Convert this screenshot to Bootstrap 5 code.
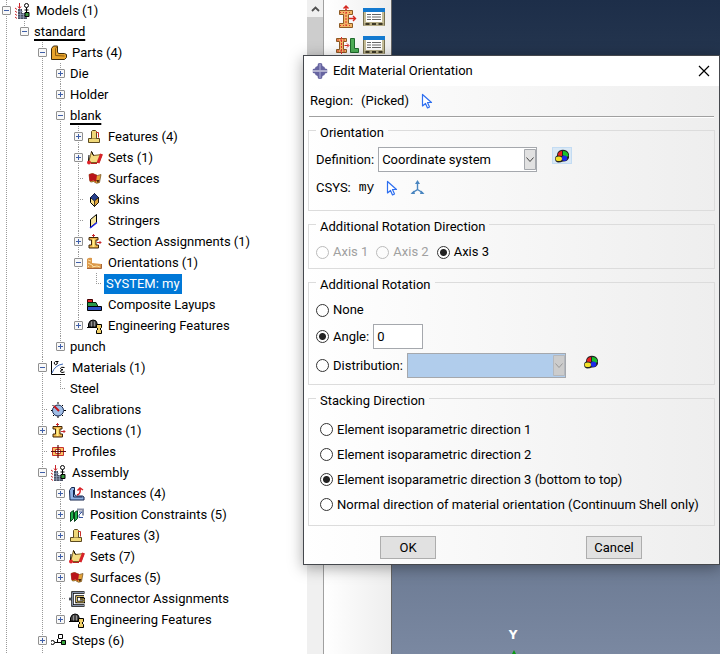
<!DOCTYPE html>
<html lang="en">
<head>
<meta charset="utf-8">
<meta name="viewport" content="width=device-width, initial-scale=1">
<title>Edit Material Orientation</title>
<link href="https://cdn.jsdelivr.net/npm/bootstrap@5.3.0/dist/css/bootstrap.min.css" rel="stylesheet">
<style>
  body { font: 13px/18px Roboto, "Noto Sans", sans-serif; color: #000; background: #fff; }
  svg { flex: none; display: block; }
  /* model tree */
  .tree-pane { width: 307px; }
  .tree ul { padding-left: 18px; }
  .tree li {
    background: repeating-linear-gradient(#999 0 1px, transparent 1px 2px) 6px 0 / 1px 100% no-repeat;
  }
  .tree li.tail { background-size: 1px 11px; }
  .node { height: 21px; padding-left: 2px; gap: 5px; white-space: nowrap; }
  .node svg { margin-left: -1px; }
  .twist {
    width: 9px; height: 9px; padding: 0; flex: none; border: 1px solid #919191; border-radius: 1px;
    background: linear-gradient(#3f5fa8, #3f5fa8) center / 5px 1px no-repeat, #f8f8f8;
  }
  .twist.plus {
    background: linear-gradient(#3f5fa8, #3f5fa8) center / 5px 1px no-repeat,
      linear-gradient(#3f5fa8, #3f5fa8) center / 1px 5px no-repeat, #f8f8f8;
  }
  .stub {
    width: 9px; height: 1px; flex: none;
    background: repeating-linear-gradient(90deg, #999 0 1px, transparent 1px 2px) right / 5px 1px no-repeat;
  }
  .current { text-decoration: underline 2px; text-underline-offset: 3px; text-decoration-skip-ink: none; }
  .picked { background: #0078d7; color: #fff; margin-left: -2px; padding: 1px 2px; }
  /* scroll bar, tool box, canvas */
  .scroller { width: 16px; background: #f0f0f0; }
  .scroller button { height: 17px; }
  .thumb { height: 420px; background: #cdcdcd; }
  .toolbox { width: 69px; background: linear-gradient(90deg, #fff, #eee); border: solid; border-width: 0 1px; border-color: #555 #666 #555 #a0a0a0; padding: 5px 4px 0 12px; }
  .toolbox .tools { display: grid; grid-template-columns: 27px 22px; row-gap: 6px; align-items: center; }
  .canvas3d { background: linear-gradient(#1d2e49, #25364f 10%, #7a88a1); padding-left: 116px; }
  .axis-y { font: bold 12px/14px "DejaVu Sans", sans-serif; color: #fff; width: 10px; }
  /* dialog */
  .dlg { left: 303px; right: 0; top: 55px; border: 1px solid #45484d; background: linear-gradient(90deg, #fff, #eee); box-shadow: 0 3px 14px rgba(0, 0, 0, .35); padding-bottom: 5px; }
  .dlg-head { height: 30px; background: #fff; padding: 0 9px 0 8px; gap: 5px; }
  .region { height: 30px; padding: 0 6px; gap: 8px; }
  .rule { margin: 0 5px; border-top: 1px solid #a0a0a0; border-bottom: 1px solid #fff; }
  .group { border: 1px solid #dcdcdc; margin: 0 4px 1px; padding: 0 7px 6px; }
  .group legend { float: none; width: auto; margin: 0; padding: 6px 4px 0; font-size: 13px; line-height: 18px; }
  .line { height: 20px; margin-top: 6px; }
  .line.tall { height: 25px; margin-top: 4px; }
  .group.g-orient { padding-bottom: 12px; }
  .g-orient .line.tall { margin-top: 5px; }
  .group.g-stack { padding: 0 11px 8px; }
  .g-stack legend { margin-left: -4px; }
  .stack-list { padding-top: 7px; }
  .g-stack .line.tall { margin-top: 0; }
  .form-check-input.dot { width: 13px; height: 13px; margin: 0; flex: none; border: 1px solid #333; background: #fff; box-shadow: none; }
  .form-check-input.dot:checked { background: radial-gradient(circle, #222 0 3px, #fff 4px); border-color: #333; }
  .form-check-input.dot:disabled { border-color: #bbb; opacity: 1; background: transparent; }
  .opt { gap: 4px; }
  .dim { color: #a0a0a0; }
  .field { height: 25px; border: 1px solid #a5a8ad; border-radius: 0; padding: 0 3px; font-size: 13px; line-height: 18px; color: #000; background-color: #fff; }
  .combo { width: 159px; appearance: none; background: #fff url("data:image/svg+xml,%3Csvg xmlns='http://www.w3.org/2000/svg' width='12' height='23'%3E%3Cpath fill='%23e1e1e1' stroke='%23a5a8ad' d='M.5 1.5h11v20h-11z'/%3E%3Cpath fill='none' stroke='%23444' d='M2.500 9.500l3.500 4 3.500-4'/%3E%3C/svg%3E") right 0 center no-repeat; }
  .combo:disabled { opacity: 1; background: #b1cdec url("data:image/svg+xml,%3Csvg xmlns='http://www.w3.org/2000/svg' width='12' height='23'%3E%3Cpath fill='%23ccc' stroke='%23b5b8bd' d='M.5 1.5h11v20h-11z'/%3E%3Cpath fill='none' stroke='%23999' d='M2.500 9.500l3.500 4 3.500-4'/%3E%3C/svg%3E") right 0 center no-repeat; }
  .angle { width: 50px; }
  .bare { padding: 0; border: 0; background: none; }
  .hot { background: #d9e8f5; border: 1px solid #c4dcf3; }
  .palette { width: 20px; height: 17px; margin: 0 0 8px 11px; display: grid; place-items: center; }
  .mono { font-family: "Liberation Mono", monospace; }
  .actions { margin-top: 10px; padding: 0 77px 0 76px; }
  .push { width: 56px; height: 23px; padding: 0; border: 1px solid #adadad; border-radius: 0; background: #e1e1e1; color: #000; font-size: 13px; line-height: 18px; }
</style>
<script src="https://cdn.jsdelivr.net/npm/bootstrap@5.3.0/dist/js/bootstrap.bundle.min.js"></script>
</head>
<body class="overflow-hidden">
<svg width="0" height="0" class="position-absolute" aria-hidden="true">
  <symbol id="i-model" viewBox="0 0 16 16">
    <path d="M3 6h4v4h5v6H3z" fill="#4b5264"/><path d="M3 8.500h5M3 11.500h9M3 14h9M5.500 6v10M8.500 10v6" stroke="#9aa4bd" stroke-width=".7"/>
    <path d="M4.500 0v5M3 3.500l1.500 2 1.500-2M0 5l2 1.500M0 8l2 1.500M0 11l2 1.500M0 14l2 1.500" fill="none" stroke="#c9242b"/>
    <circle cx="11.500" cy="2.500" r="2" fill="#fff" stroke="#000"/><path d="M11.500 4.500v5M9.500 7h4" stroke="#000"/><path d="M10 9.500h4v4h-4z" fill="#3c9a3f" stroke="#000"/>
  </symbol>
  <symbol id="i-part" viewBox="0 0 16 16">
    <path d="M.5 3.500l2-2.500h4v6l1 1.500h6l2 1v3l-2 2H.5z" fill="#e8a42c" stroke="#3b2a0c"/><path d="M4.500 3.500v7l9 .5M6.500 1l-2 2.500" fill="none" stroke="#8a5a10"/>
  </symbol>
  <symbol id="i-feature" viewBox="0 0 16 16">
    <path d="M1.500 9.500h11v4h-11z" fill="#f0d878" stroke="#5c4a20"/><path d="M4.500 9.500v-7l1-1h3l1 1v7" fill="#f0d878" stroke="#5c4a20"/><path d="M9 3.500h2.500v5" fill="none" stroke="#c9302c"/>
  </symbol>
  <symbol id="i-set" viewBox="0 0 16 16">
    <path d="M1.500 12.500l2-7 1-4 2 4 8.500-1-3 8z" fill="#f3dc82" stroke="#7a5b1d"/><path d="M2 5l-.5 6M4.500 1.500L6.500 5.500" stroke="#000"/><path d="M14.500 4l-3.500 9" stroke="#d8232a" stroke-width="3"/><circle cx="2" cy="12.500" r="2" fill="#e02228"/><path d="M4 13.500h6" stroke="#b22"/>
  </symbol>
  <symbol id="i-surface" viewBox="0 0 16 16">
    <path d="M2 3.500q4-2 6 0t6 0l-1.500 8q-3 2-6-1-3 1-3.500 0z" fill="#e5a33a" stroke="#6b4a18" stroke-width=".7"/><path d="M2 3.500q4-2 6 0l2 .5-1 7q-2-2-3-1.500-2 1-3.500 0z" fill="#b8141a"/><path d="M9 9l2 3 1.500-3z" fill="#4c2a10"/>
  </symbol>
  <symbol id="i-skin" viewBox="0 0 16 16">
    <path d="M3.500 5.500l4-4 4 4v5l-4 4-4-4z" fill="#f6dd86" stroke="#000"/><path d="M3.500 5.500l4-4 4 4-4 3.500z" fill="#27408c" stroke="#14204a"/><path d="M7.500 9v5.500l4-4v-5z" fill="#dfa43d" stroke="#000" stroke-width=".7"/>
  </symbol>
  <symbol id="i-stringer" viewBox="0 0 16 16">
    <path d="M3.500 6.500l6-5v8l-6 5z" fill="#f6e59b" stroke="#000"/><path d="M3 15l7-5.500" stroke="#1a25ee" stroke-width="1.500"/>
  </symbol>
  <symbol id="i-section" viewBox="0 0 16 16">
    <path d="M2 3.500h9v2.500H9v5h2.500v3H2v-3h2.500V6H2z" fill="#f0b54b" stroke="#3f2408"/><path d="M6.500 0v3M5 1.500h3M10 8.500h4M12.500 7l1.500 1.500-1.500 1.500" fill="none" stroke="#c8272c"/><path d="M6.500 5v8" stroke="#fff08a" stroke-width="2"/>
  </symbol>
  <symbol id="i-orient" viewBox="0 0 16 16">
    <path d="M0 4q2-2 5-1v5l9.500 1v4.500H0z" fill="#dc9a4c"/><path d="M1 5l3 1M1 8l4 2 2 2M5 12l5-1 3 1M1 11l1 1" stroke="#fbe0a8" fill="none"/><path d="M0 13.500h14.500V9" fill="none" stroke="#a8663a"/>
  </symbol>
  <symbol id="i-layup" viewBox="0 0 16 16">
    <path d="M.5 2.500h5v3h-5z" fill="#e4252b" stroke="#400"/><path d="M.5 5.500H9l2 4H.5z" fill="#2a9a4a" stroke="#021"/><path d="M.5 9.500h14v4H.5z" fill="#2c50c8" stroke="#000"/>
  </symbol>
  <symbol id="i-eng" viewBox="0 0 16 16">
    <path d="M1.500 9V6q1-4 4.500-4t4 3v4z" fill="#454545" stroke="#000"/><path d="M-1 9.500h11" stroke="#000"/><path d="M4.500 3.500v5M7.500 3.500v5" stroke="#aaa" stroke-width=".8"/><path d="M9.500 6.500h5v3l-1.500 1.500 1.500 1.500v3h-5v-3l1.500-1.500-1.500-1.500z" fill="#f1d069" stroke="#000"/>
  </symbol>
  <symbol id="i-material" viewBox="0 0 16 16">
    <path d="M.5 1v13.500H14" fill="none" stroke="#000"/><path d="M1 13q3-8 11-9" fill="none" stroke="#3c68b8"/><path d="M7.500 1.500H4.500q-2 1-1 2.500t2.500 0T5 1.500M13.500 7.500q-4-1-4 1 0 1 2.500 1.200-3 .3-2.500 2 1 1.500 4 .3" fill="none" stroke="#000"/>
  </symbol>
  <symbol id="i-calib" viewBox="0 0 16 16">
    <path d="M7 0v2M7 14v2M0 8.500h2M13 8.500h2M1.500 3l1 1M12 3l-1 1M2 14l1-1M12 14l-1-1" stroke="#000"/><circle cx="7" cy="8.500" r="5.500" fill="#9fbde6" stroke="#1b2b50"/><path d="M3 4l5 5" stroke="#c3161c" stroke-width="2"/>
  </symbol>
  <symbol id="i-profile" viewBox="0 0 16 16">
    <path d="M1.500 3.500h11v8h-11z" fill="#f6c765" stroke="#c9302c"/><path d="M4.500 5.500h5v4h-5z" fill="#fff" stroke="#c9302c"/><path d="M7 1v13M0 7.500h15" stroke="#5a1010" stroke-width="1.200"/>
  </symbol>
  <symbol id="i-instance" viewBox="0 0 16 16">
    <path d="M.5 4.500l2-3h3v7l2 1.500h6l1.500 1v3h-14z" fill="#8fb2e4" stroke="#14254d"/><path d="M4.500 4v7h9" fill="none" stroke="#14254d"/><path d="M8 9q4-1 3-6M8.500 4.500L11 2l3 2" fill="none" stroke="#d81f26" stroke-width="1.500"/>
  </symbol>
  <symbol id="i-position" viewBox="0 0 16 16">
    <path d="M1.500 5.500l3-2v8l-3 3zM5.500 5.500l3-2v8l-3 3z" fill="#22b14c" stroke="#06401a"/><path d="M8 2.500h6v6" fill="none" stroke="#8891a8" stroke-width="2"/><path d="M10 5h3l-3 3v2.500h4" fill="none" stroke="#34529e"/>
  </symbol>
  <symbol id="i-connector" viewBox="0 0 16 16">
    <path d="M15.500 1.500h-12v13h12M0 8h3.500M15 5.500H7.500v5.500H15V8h-4" fill="none" stroke="#000" stroke-width="2.400"/><path d="M15 1.500H3.500v13H15M0 8h3" fill="none" stroke="#a9bad8" stroke-width=".8"/><path d="M15 5.500H7.500v5.500H15V8h-4" fill="none" stroke="#f0d070" stroke-width=".9"/>
  </symbol>
  <symbol id="i-step" viewBox="0 0 16 16">
    <circle cx="1.500" cy="9.500" r="2" fill="#fff" stroke="#000"/><path d="M4 9.500h6M6.500 9V6" stroke="#000"/><path d="M7.500 1.500h4v4h-4z" fill="#fff" stroke="#000"/><path d="M10.500 7.500h4v4h-4z" fill="#39a53c" stroke="#000"/>
  </symbol>
  <symbol id="i-table" viewBox="0 0 22 20">
    <path d="M.5 1.500h21v17H.5z" fill="#fff" stroke="#77704f"/><path d="M0 1h22v4H0z" fill="#1379cf"/><path d="M1 15h20v4H1z" fill="#b5ac86"/><path d="M2 5v11M20 5v11" stroke="#c5bd98" stroke-width="2"/><path d="M4 7.500h4M4 10h4M4 12.500h4M9 7.500h9M9 10h9M9 12.500h9" stroke="#666"/><path d="M2.500 17h4M9 17h4M15.500 17h4" stroke="#3c3826" stroke-width="2"/>
  </symbol>
  <symbol id="i-beam" viewBox="0 0 22 24">
    <path d="M3.500 5.500h13v4h-4v9h4v4h-13v-4h4v-9h-4z" fill="#f2b565" stroke="#8d5a24"/><path d="M10 1v21" stroke="#d33" stroke-dasharray="2 1"/><path d="M4 7.500h12M4 20.500h12" stroke="#d33" stroke-dasharray="1 2"/><path d="M10 5V1M7.500 3.500L10 1l2.500 2.500M13 13.500h6M17 11l2.500 2.500-2.500 2.500" fill="none" stroke="#d4281f" stroke-width="1.400"/>
  </symbol>
  <symbol id="i-beaml" viewBox="0 0 24 20">
    <path d="M.5 3.500h10v3h-3v8h3v3H.5v-3h3v-8h-3z" fill="#f2b565" stroke="#8d5a24"/><path d="M5.500 2v17M1 5h9M1 16h9" stroke="#d33" stroke-dasharray="2 1"/><path d="M8.500 10.500h4M11 8.500l2 2-2 2" fill="none" stroke="#d4281f"/><path d="M14.500 3.500h4v10h4v4h-8z" fill="#4fae57" stroke="#1f6a2c"/>
  </symbol>
  <symbol id="i-arrow" viewBox="0 0 12 16">
    <path d="M1.500 1.500v11.500l3-2.500 2 4.500 2-1-2-4.500h4z" fill="#fff" stroke="#2e6ff0" stroke-width="1.200" stroke-linejoin="round"/>
  </symbol>
  <symbol id="i-triad" viewBox="0 0 16 16">
    <path d="M7.500 2v7.500L2 13M7.500 9.500L13 13" fill="none" stroke="#4a86c0" stroke-width="1.400"/><path d="M5 4l2.500-4L10 4zM4 10.500L.5 14h4.500zM11 10.500l3.500 3.500H10z" fill="#4a86c0"/>
  </symbol>
  <symbol id="i-palette" viewBox="0 0 16 14">
    <path d="M1 9.500q0-2 2-3 0-4.500 4-5.500 6-1 8 4v4q-2 4-6 3.500-2 1-5 1-3-.5-3-4z" fill="#222"/><path d="M4 6.500q-.5-4 4-4.500v5z" fill="#ee2020"/><path d="M9 2q5 0 5.500 5l-3 1.500L9 6z" fill="#17c02a"/><circle cx="10.500" cy="9.300" r="2.700" fill="#1c28e8"/><ellipse cx="4.800" cy="9.700" rx="3.200" ry="2.300" fill="#f2e12a"/>
  </symbol>
  <symbol id="i-abaqus" viewBox="0 0 16 16">
    <path d="M8 0l2 .5.500 2.500 2 1 .5 1.500 2 .500.500 1.500H.5L1 6l2-.5L3.500 4l2-1L6 .5zM.5 8.500h15L15 10l-2 .5-.5 1.500-2 1-.5 2.500-2 .5-2-.5L5.500 13l-2-1L3 10.500 1 10z" fill="#6664a0"/><path d="M7 1h2v6H7zM7 9h2v6H7z" fill="#8c8bbd"/>
  </symbol>
</svg>

<div class="d-flex vh-100 position-relative overflow-hidden">
  <nav class="tree-pane tree flex-shrink-0 overflow-hidden" aria-label="Model tree">
    <ul class="list-unstyled m-0 ps-0 h-100">
      <li class="h-100"><div class="node d-flex align-items-center"><button class="twist" aria-label="Collapse Models"></button><svg width="16" height="16"><use href="#i-model"/></svg><span>Models (1)</span></div>
        <ul class="list-unstyled m-0">
          <li class="tail"><div class="node d-flex align-items-center"><button class="twist" aria-label="Collapse standard"></button><span class="current">standard</span></div>
            <ul class="list-unstyled m-0">
              <li><div class="node d-flex align-items-center"><button class="twist" aria-label="Collapse Parts"></button><svg width="16" height="16"><use href="#i-part"/></svg><span>Parts (4)</span></div>
                <ul class="list-unstyled m-0">
                  <li><div class="node d-flex align-items-center"><button class="twist plus" aria-label="Expand Die"></button><span>Die</span></div></li>
                  <li><div class="node d-flex align-items-center"><button class="twist plus" aria-label="Expand Holder"></button><span>Holder</span></div></li>
                  <li><div class="node d-flex align-items-center"><button class="twist" aria-label="Collapse blank"></button><span class="current">blank</span></div>
                    <ul class="list-unstyled m-0">
                      <li><div class="node d-flex align-items-center"><button class="twist plus" aria-label="Expand Features"></button><svg width="16" height="16"><use href="#i-feature"/></svg><span>Features (4)</span></div></li>
                      <li><div class="node d-flex align-items-center"><button class="twist plus" aria-label="Expand Sets"></button><svg width="16" height="16"><use href="#i-set"/></svg><span>Sets (1)</span></div></li>
                      <li><div class="node d-flex align-items-center"><i class="stub"></i><svg width="16" height="16"><use href="#i-surface"/></svg><span>Surfaces</span></div></li>
                      <li><div class="node d-flex align-items-center"><i class="stub"></i><svg width="16" height="16"><use href="#i-skin"/></svg><span>Skins</span></div></li>
                      <li><div class="node d-flex align-items-center"><i class="stub"></i><svg width="16" height="16"><use href="#i-stringer"/></svg><span>Stringers</span></div></li>
                      <li><div class="node d-flex align-items-center"><button class="twist plus" aria-label="Expand Section Assignments"></button><svg width="16" height="16"><use href="#i-section"/></svg><span>Section Assignments (1)</span></div></li>
                      <li><div class="node d-flex align-items-center"><button class="twist" aria-label="Collapse Orientations"></button><svg width="16" height="16"><use href="#i-orient"/></svg><span>Orientations (1)</span></div>
                        <ul class="list-unstyled m-0">
                          <li class="tail"><div class="node d-flex align-items-center"><i class="stub"></i><span class="picked">SYSTEM: my</span></div></li>
                        </ul>
                      </li>
                      <li><div class="node d-flex align-items-center"><i class="stub"></i><svg width="16" height="16"><use href="#i-layup"/></svg><span>Composite Layups</span></div></li>
                      <li class="tail"><div class="node d-flex align-items-center"><button class="twist plus" aria-label="Expand Engineering Features"></button><svg width="16" height="16"><use href="#i-eng"/></svg><span>Engineering Features</span></div></li>
                    </ul>
                  </li>
                  <li class="tail"><div class="node d-flex align-items-center"><button class="twist plus" aria-label="Expand punch"></button><span>punch</span></div></li>
                </ul>
              </li>
              <li><div class="node d-flex align-items-center"><button class="twist" aria-label="Collapse Materials"></button><svg width="16" height="16"><use href="#i-material"/></svg><span>Materials (1)</span></div>
                <ul class="list-unstyled m-0">
                  <li class="tail"><div class="node d-flex align-items-center"><i class="stub"></i><span>Steel</span></div></li>
                </ul>
              </li>
              <li><div class="node d-flex align-items-center"><i class="stub"></i><svg width="16" height="16"><use href="#i-calib"/></svg><span>Calibrations</span></div></li>
              <li><div class="node d-flex align-items-center"><button class="twist plus" aria-label="Expand Sections"></button><svg width="16" height="16"><use href="#i-section"/></svg><span>Sections (1)</span></div></li>
              <li><div class="node d-flex align-items-center"><i class="stub"></i><svg width="16" height="16"><use href="#i-profile"/></svg><span>Profiles</span></div></li>
              <li><div class="node d-flex align-items-center"><button class="twist" aria-label="Collapse Assembly"></button><svg width="16" height="16"><use href="#i-model"/></svg><span>Assembly</span></div>
                <ul class="list-unstyled m-0">
                  <li><div class="node d-flex align-items-center"><button class="twist plus" aria-label="Expand Instances"></button><svg width="16" height="16"><use href="#i-instance"/></svg><span>Instances (4)</span></div></li>
                  <li><div class="node d-flex align-items-center"><button class="twist plus" aria-label="Expand Position Constraints"></button><svg width="16" height="16"><use href="#i-position"/></svg><span>Position Constraints (5)</span></div></li>
                  <li><div class="node d-flex align-items-center"><button class="twist plus" aria-label="Expand Features"></button><svg width="16" height="16"><use href="#i-feature"/></svg><span>Features (3)</span></div></li>
                  <li><div class="node d-flex align-items-center"><button class="twist plus" aria-label="Expand Sets"></button><svg width="16" height="16"><use href="#i-set"/></svg><span>Sets (7)</span></div></li>
                  <li><div class="node d-flex align-items-center"><button class="twist plus" aria-label="Expand Surfaces"></button><svg width="16" height="16"><use href="#i-surface"/></svg><span>Surfaces (5)</span></div></li>
                  <li><div class="node d-flex align-items-center"><i class="stub"></i><svg width="16" height="16"><use href="#i-connector"/></svg><span>Connector Assignments</span></div></li>
                  <li class="tail"><div class="node d-flex align-items-center"><button class="twist plus" aria-label="Expand Engineering Features"></button><svg width="16" height="16"><use href="#i-eng"/></svg><span>Engineering Features</span></div></li>
                </ul>
              </li>
              <li class="pb-2"><div class="node d-flex align-items-center"><button class="twist plus" aria-label="Expand Steps"></button><svg width="16" height="16"><use href="#i-step"/></svg><span>Steps (6)</span></div></li>
            </ul>
          </li>
        </ul>
      </li>
    </ul>
  </nav>

  <div class="scroller flex-shrink-0">
    <button class="bare d-flex w-100 align-items-center justify-content-center" aria-label="Scroll up"><svg width="9" height="6"><path d="M1 5l3.500-3.500L8 5" fill="none" stroke="#505050" stroke-width="1.800"/></svg></button>
    <div class="thumb"></div>
  </div>

  <div class="toolbox flex-shrink-0">
    <div class="tools">
      <button class="bare" aria-label="Create section"><svg width="22" height="24"><use href="#i-beam"/></svg></button>
      <button class="bare" aria-label="Section manager"><svg width="22" height="20"><use href="#i-table"/></svg></button>
      <button class="bare" aria-label="Assign section"><svg width="24" height="20"><use href="#i-beaml"/></svg></button>
      <button class="bare" aria-label="Assignment manager"><svg width="22" height="20"><use href="#i-table"/></svg></button>
    </div>
  </div>

  <main class="canvas3d flex-grow-1 d-flex flex-column justify-content-end">
    <div class="axis-y text-center">Y</div>
    <svg width="12" height="12"><path d="M6 8l2 4H4z" fill="#0a9a12"/></svg>
  </main>

  <form class="dlg position-absolute" role="dialog" aria-labelledby="dlg-title" onsubmit="return false">
    <div class="dlg-head d-flex align-items-center">
      <svg width="16" height="16"><use href="#i-abaqus"/></svg>
      <span id="dlg-title" class="flex-grow-1">Edit Material Orientation</span>
      <button type="button" class="bare" aria-label="Close"><svg width="12" height="12"><path d="M1 1l10 10M11 1L1 11" stroke="#000" stroke-width="1.200"/></svg></button>
    </div>
    <div class="region d-flex align-items-center">
      <span>Region:</span><span>(Picked)</span>
      <button type="button" class="bare ms-1" aria-label="Pick region"><svg width="12" height="16"><use href="#i-arrow"/></svg></button>
    </div>
    <div class="rule"></div>

    <fieldset class="group g-orient">
      <legend>Orientation</legend>
      <div class="line tall d-flex align-items-center opt">
        <label for="definition">Definition:</label>
        <select id="definition" class="field combo"><option>Coordinate system</option></select>
        <button type="button" class="bare hot palette" aria-label="Create discrete field"><svg width="16" height="14"><use href="#i-palette"/></svg></button>
      </div>
      <div class="line d-flex align-items-center">
        <span>CSYS:</span><span class="mono ms-2">my</span>
        <button type="button" class="bare ms-2 ps-1" aria-label="Pick CSYS"><svg width="12" height="16"><use href="#i-arrow"/></svg></button>
        <button type="button" class="bare ms-2 ps-1" aria-label="Create datum CSYS"><svg width="16" height="16"><use href="#i-triad"/></svg></button>
      </div>
    </fieldset>

    <fieldset class="group">
      <legend>Additional Rotation Direction</legend>
      <div class="line d-flex align-items-center gap-2">
        <div class="d-flex align-items-center opt dim"><input class="form-check-input dot" type="radio" name="axis" id="ax1" disabled><label for="ax1">Axis 1</label></div>
        <div class="d-flex align-items-center opt dim"><input class="form-check-input dot" type="radio" name="axis" id="ax2" disabled><label for="ax2">Axis 2</label></div>
        <div class="d-flex align-items-center opt"><input class="form-check-input dot" type="radio" name="axis" id="ax3" checked><label for="ax3">Axis 3</label></div>
      </div>
    </fieldset>

    <fieldset class="group">
      <legend>Additional Rotation</legend>
      <div class="line d-flex align-items-center opt"><input class="form-check-input dot" type="radio" name="rot" id="r0"><label for="r0">None</label></div>
      <div class="line tall d-flex align-items-center opt"><input class="form-check-input dot" type="radio" name="rot" id="r1" checked><label for="r1">Angle:</label><input class="field angle" type="text" value="0" aria-label="Angle value"></div>
      <div class="line tall d-flex align-items-center opt"><input class="form-check-input dot" type="radio" name="rot" id="r2"><label for="r2">Distribution:</label><select class="field combo" disabled aria-label="Distribution"><option></option></select>
        <button type="button" class="bare palette" aria-label="Create distribution"><svg width="16" height="14"><use href="#i-palette"/></svg></button></div>
    </fieldset>

    <fieldset class="group g-stack">
      <legend>Stacking Direction</legend>
      <div class="stack-list">
        <div class="line tall d-flex align-items-center opt"><input class="form-check-input dot" type="radio" name="stack" id="s1"><label for="s1">Element isoparametric direction 1</label></div>
        <div class="line tall d-flex align-items-center opt"><input class="form-check-input dot" type="radio" name="stack" id="s2"><label for="s2">Element isoparametric direction 2</label></div>
        <div class="line tall d-flex align-items-center opt"><input class="form-check-input dot" type="radio" name="stack" id="s3" checked><label for="s3">Element isoparametric direction 3 (bottom to top)</label></div>
        <div class="line tall d-flex align-items-center opt"><input class="form-check-input dot" type="radio" name="stack" id="s4"><label for="s4" class="text-nowrap">Normal direction of material orientation (Continuum Shell only)</label></div>
      </div>
    </fieldset>

    <div class="actions d-flex justify-content-between">
      <button type="submit" class="btn push">OK</button>
      <button type="button" class="btn push">Cancel</button>
    </div>
  </form>
</div>
</body>
</html>
